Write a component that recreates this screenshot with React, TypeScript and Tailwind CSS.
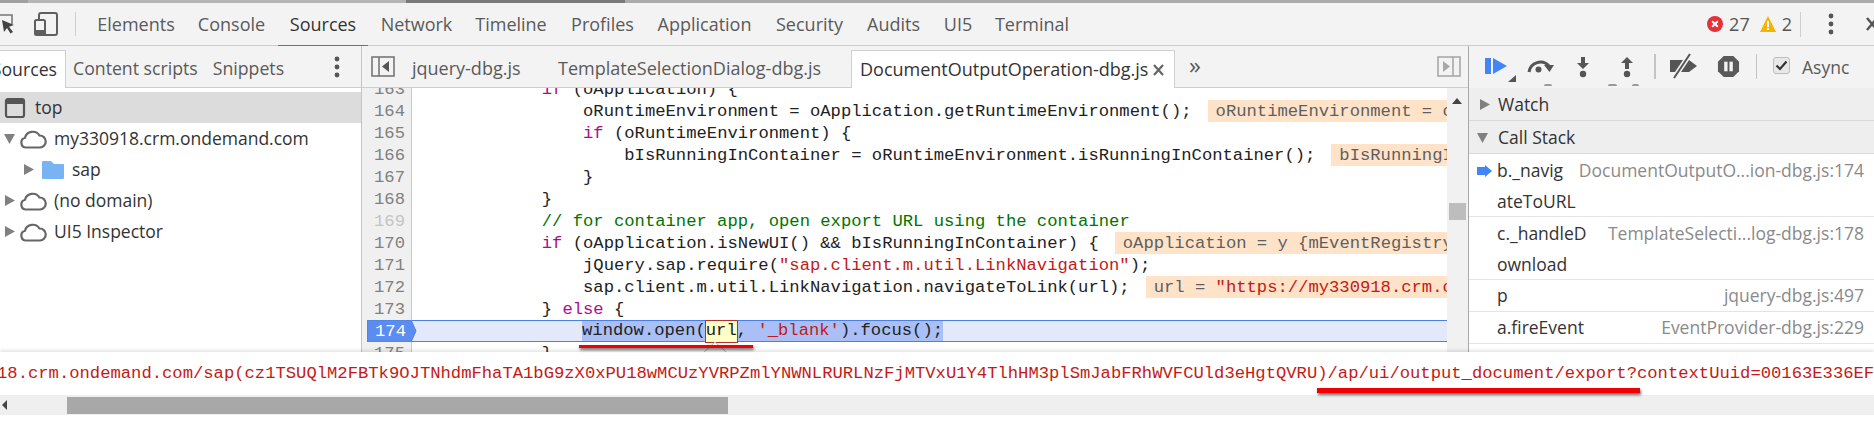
import React from "react";

const SANS = "font-['Open_Sans','Noto_Sans',sans-serif]";
const MONO = "font-['Liberation_Mono',monospace]";

const tabs: [string, string][] = [
  ["Elements", "w-[98px]"],
  ["Console", "w-[93px]"],
  ["Sources", "w-[90px]"],
  ["Network", "w-[97px]"],
  ["Timeline", "w-[92px]"],
  ["Profiles", "w-[91px]"],
  ["Application", "w-[113px]"],
  ["Security", "w-[97px]"],
  ["Audits", "w-[71px]"],
  ["UI5", "w-[58px]"],
  ["Terminal", "w-[90px]"],
];

function Cloud() {
  return (
    <svg width="28" height="22" viewBox="0 0 28 22" className="shrink-0 ml-[4px]">
      <path d="M7 19.500a5 5 0 0 1-1-9.800A8 8 0 0 1 20.500 7.500a6 6 0 0 1 .5 12z" fill="none" stroke="#666" strokeWidth="2.200" />
    </svg>
  );
}

function Tri({ open, className = "" }: { open?: boolean; className?: string }) {
  return (
    <svg width="11" height="11" viewBox="0 0 11 11" className={"shrink-0 " + className}>
      {open ? <path d="M0 1h11L5.500 11z" fill="#808080" /> : <path d="M1 0l10 5.500L1 11z" fill="#808080" />}
    </svg>
  );
}

function TreeRow({ children, active }: { children: React.ReactNode; active?: boolean }) {
  return <div className={"h-[31px] flex items-center text-[#333] " + (active ? "bg-[#dcdcdc]" : "")}>{children}</div>;
}

type Seg = { t: string; c?: string };
const K = "text-[#aa0d91]";
const S = "text-[#c41a16]";
const G = "text-[#007400]";

function Deco({ children }: { children: React.ReactNode }) {
  return <span className="bg-[#ffe3c9] text-[#5f5f5f] pl-[8px] ml-[16px] h-[22px] block flex-1 min-w-0 overflow-hidden">{children}</span>;
}

function Line({ n, segs, deco, dim }: { n: number; segs: Seg[]; deco?: React.ReactNode; dim?: boolean }) {
  return (
    <div className="h-[22px] flex items-center leading-[24px]">
      <div className={"w-[50px] shrink-0 h-full bg-[#f0f0f0] border-r border-[#c8c8c8] pr-[6px] text-right " + (dim ? "text-[#c4c4c4]" : "text-[#808080]")}>{n}</div>
      <div className="flex-1 min-w-0 flex pl-[6px] h-full whitespace-pre text-[#222] overflow-hidden">
        <span className="shrink-0">{segs.map((s, i) => <span key={i} className={s.c}>{s.t}</span>)}</span>
        {deco ? <Deco>{deco}</Deco> : null}
      </div>
    </div>
  );
}

export default function App() {
  return (
    <div className={"relative w-[1874px] h-[425px] overflow-hidden bg-white " + SANS}>
      {/* sliver of the page above */}
      <div className="h-[3px] bg-[#ababab] flex">
        <div className="w-[28px] bg-[#a0a0a0]" />
        <div className="w-[378px] bg-[#b5b5b5]" />
        <div className="w-[219px] bg-[#7a7a7a]" />
      </div>

      {/* main toolbar */}
      <div className="h-[43px] bg-[#f3f3f3] border-b border-[#cccccc] flex items-stretch text-[#5a5a5a] text-[18px]">
        <div className="w-[87px] shrink-0 relative flex items-center">
          <svg width="16" height="20" viewBox="0 0 16 20" className="shrink-0">
            <path d="M0 1h12v9" fill="none" stroke="#777" strokeWidth="1.600" />
            <path d="M2 6l12 5-5 1.800 4 5.200-2.500 1.500-3.500-5.500L4 18z" fill="#444" />
          </svg>
          <svg width="24" height="24" viewBox="0 0 24 24" className="shrink-0 ml-[18px]">
            <rect x="5" y="1" width="18" height="22" rx="2" fill="none" stroke="#5f5f5f" strokeWidth="2" />
            <rect x="1" y="8" width="10" height="15" rx="1.500" fill="#f3f3f3" stroke="#5f5f5f" strokeWidth="2" />
            <rect x="2" y="18" width="8" height="4" fill="#5f5f5f" />
          </svg>
          <div className="absolute left-[75px] top-[9px] bottom-[9px] w-px bg-[#cfcfcf]" />
        </div>
        {tabs.map(([t, w]) => (
          <div
            key={t}
            className={"flex items-center justify-center shrink-0 " + w + (t === "Sources" ? " text-[#333] border-b-2 border-[#3879d9] h-[44px]" : "")}
          >
            {t}
          </div>
        ))}
        <div className="flex-1" />
        <div className="flex items-center text-[18px] text-[#555]">
          <svg width="16" height="16" viewBox="0 0 16 16">
            <circle cx="8" cy="8" r="8" fill="#e5303a" />
            <path d="M5.200 5.200l5.600 5.600M10.800 5.200l-5.600 5.600" stroke="#fff" strokeWidth="2" />
          </svg>
          <span className="ml-[6px]">27</span>
          <svg width="16" height="16" viewBox="0 0 16 16" className="ml-[10px]">
            <path d="M8 0l8 16H0z" fill="#f4b400" />
            <path d="M7 5h2v6H7zM7 12h2v2H7z" fill="#fff" />
          </svg>
          <span className="ml-[6px]">2</span>
          <div className="w-px h-[25px] bg-[#cfcfcf] ml-[8px]" />
          <svg width="6" height="22" viewBox="0 0 6 22" className="ml-[27px]">
            <circle cx="3" cy="3" r="2.400" fill="#555" />
            <circle cx="3" cy="11" r="2.400" fill="#555" />
            <circle cx="3" cy="19" r="2.400" fill="#555" />
          </svg>
          <svg width="12" height="14" viewBox="0 0 12 14" className="ml-[32px] -mr-[4px]">
            <path d="M1 1l10 12M11 1L1 13" stroke="#555" strokeWidth="2.400" />
          </svg>
        </div>
      </div>

      {/* panels */}
      <div className="h-[306px] flex">
        {/* navigator */}
        <div className="w-[362px] shrink-0 border-r border-[#c4c4c4] bg-white text-[17.5px]">
          <div className="h-[42px] bg-[#f3f3f3] border-b border-[#cfcfcf] flex items-end text-[#5a5a5a] relative text-[17.7px]">
            <div className="w-[66px] h-[38px] bg-white border-r border-t border-[#d0d0d0] flex items-center justify-end pr-[8px] overflow-hidden text-[#333] -mb-px shrink-0">Sources</div>
            <div className="h-[38px] flex items-center ml-[7px]">Content scripts</div>
            <div className="h-[38px] flex items-center ml-[15px]">Snippets</div>
            <svg width="6" height="22" viewBox="0 0 6 22" className="absolute left-[334px] top-[10px]">
              <circle cx="3" cy="3" r="2.400" fill="#555" />
              <circle cx="3" cy="11" r="2.400" fill="#555" />
              <circle cx="3" cy="19" r="2.400" fill="#555" />
            </svg>
          </div>
          <div className="pt-[4px]">
            <TreeRow active>
              <svg width="22" height="22" viewBox="0 0 22 22" className="ml-[4px]">
                <rect x="2" y="2" width="18" height="18" rx="2" fill="none" stroke="#555" strokeWidth="2.200" />
                <rect x="2" y="2" width="18" height="5" fill="#555" />
              </svg>
              <span className="ml-[9px]">top</span>
            </TreeRow>
            <TreeRow>
              <Tri open className="ml-[4px]" />
              <Cloud />
              <span className="ml-[7px]">my330918.crm.ondemand.com</span>
            </TreeRow>
            <TreeRow>
              <Tri className="ml-[23px]" />
              <svg width="24" height="20" viewBox="0 0 24 20" className="ml-[7px]">
                <path d="M1 2a1 1 0 0 1 1-1h8l3 3h9a1 1 0 0 1 1 1v13a1 1 0 0 1-1 1H2a1 1 0 0 1-1-1z" fill="#78b3f4" />
              </svg>
              <span className="ml-[7px]">sap</span>
            </TreeRow>
            <TreeRow>
              <Tri className="ml-[4px]" />
              <Cloud />
              <span className="ml-[7px]">(no domain)</span>
            </TreeRow>
            <TreeRow>
              <Tri className="ml-[4px]" />
              <Cloud />
              <span className="ml-[7px]">UI5 Inspector</span>
            </TreeRow>
          </div>
        </div>

        {/* editor */}
        <div className="w-[1107px] shrink-0 flex flex-col border-r border-[#a8a8a8]">
          <div className="h-[42px] shrink-0 bg-[#f3f3f3] border-b border-[#cfcfcf] flex items-end text-[18px] text-[#5a5a5a] relative">
            <svg width="24" height="21" viewBox="0 0 24 21" className="absolute left-[9px] top-[10px]">
              <rect x="1" y="1" width="22" height="19" fill="none" stroke="#777" strokeWidth="1.600" />
              <path d="M8 1v19" stroke="#777" strokeWidth="1.600" />
              <path d="M18 5v11l-7-5.500z" fill="#555" />
            </svg>
            <div className="h-[38px] w-[146px] shrink-0 flex items-center ml-[50px]">jquery-dbg.js</div>
            <div className="h-[38px] w-[293px] shrink-0 flex items-center">TemplateSelectionDialog-dbg.js</div>
            <div className="h-[38px] w-[324px] shrink-0 bg-white border border-b-0 border-[#d0d0d0] flex items-center pl-[8px] text-[#333] -mb-px relative">
              DocumentOutputOperation-dbg.js
              <svg width="11" height="12" viewBox="0 0 11 12" className="absolute left-[301px] top-[13px]">
                <path d="M1 1l9 10M10 1L1 11" stroke="#666" strokeWidth="2.200" />
              </svg>
            </div>
            <div className="h-[38px] flex items-center ml-[14px] text-[24px] leading-none pb-[6px]">»</div>
            <svg width="24" height="21" viewBox="0 0 24 21" className="absolute left-[1075px] top-[10px]">
              <rect x="1" y="1" width="22" height="19" fill="none" stroke="#a8a8a8" strokeWidth="1.600" />
              <path d="M16 1v19" stroke="#a8a8a8" strokeWidth="1.600" />
              <path d="M6 5v11l7-5.500z" fill="#a8a8a8" />
            </svg>
          </div>
          <div className="flex-1 flex min-h-0">
            <div className={"flex-1 min-w-0 overflow-hidden text-[17.2px] relative " + MONO}>
              <div className="-mt-[10px]">
                <Line n={163} segs={[{ t: "            " }, { t: "if", c: K }, { t: " (oApplication) {" }]} />
                <Line n={164} segs={[{ t: "                oRuntimeEnvironment = oApplication.getRuntimeEnvironment();" }]} deco={<>oRuntimeEnvironment = oApplication</>} />
                <Line n={165} segs={[{ t: "                " }, { t: "if", c: K }, { t: " (oRuntimeEnvironment) {" }]} />
                <Line n={166} segs={[{ t: "                    bIsRunningInContainer = oRuntimeEnvironment.isRunningInContainer();" }]} deco={<>bIsRunningInContainer = true</>} />
                <Line n={167} segs={[{ t: "                }" }]} />
                <Line n={168} segs={[{ t: "            }" }]} />
                <Line n={169} dim segs={[{ t: "            " }, { t: "// for container app, open export URL using the container", c: G }]} />
                <Line n={170} segs={[{ t: "            " }, { t: "if", c: K }, { t: " (oApplication.isNewUI() && bIsRunningInContainer) {" }]} deco={<>oApplication = y {"{"}mEventRegistry: Object</>} />
                <Line n={171} segs={[{ t: "                jQuery.sap.require(" }, { t: '"sap.client.m.util.LinkNavigation"', c: S }, { t: ");" }]} />
                <Line n={172} segs={[{ t: "                sap.client.m.util.LinkNavigation.navigateToLink(url);" }]} deco={<>url = <span className={S}>"https://my330918.crm.ondemand.com</span></>} />
                <Line n={173} segs={[{ t: "            } " }, { t: "else", c: K }, { t: " {" }]} />
                <div className="h-[22px] flex items-stretch leading-[24px]">
                  <div className="w-[50px] shrink-0 bg-[#f0f0f0] border-r border-[#c8c8c8]" />
                  <div className="flex-1 bg-[#e3e9fb] border-y border-[#4a7fe8] whitespace-pre pl-[170px] text-[#222] flex items-center">
                    <span className="bg-[#a9bff5] h-full flex items-center">
                      window.open(<span className="bg-[#ffffc6] h-[23px] border border-[#b5302a] -mx-px flex items-center">url</span>, <span className={S}>'_blank'</span>).focus();
                    </span>
                  </div>
                </div>
                <Line n={175} segs={[{ t: "            }" }]} />
              </div>
              {/* breakpoint marker */}
              <svg width="50" height="22" viewBox="0 0 50 22" className="absolute left-[5px] top-[232px]">
                <path d="M0 0h44l5 11-5 11H0z" fill="#5b8cf0" stroke="#4a7fe8" />
              </svg>
              <span className="absolute left-[13px] top-[232px] h-[22px] leading-[24px] text-white">174</span>
            </div>
            {/* vertical scrollbar */}
            <div className="w-[21px] shrink-0 bg-[#f1f1f1] relative">
              <svg width="10" height="6" viewBox="0 0 10 6" className="absolute left-[5px] top-[10px]">
                <path d="M5 0l5 6H0z" fill="#444" />
              </svg>
              <div className="absolute left-[2px] top-[115px] w-[17px] h-[17px] bg-[#bdbdbd]" />
            </div>
          </div>
        </div>

        {/* debugger sidebar */}
        <div className="flex-1 min-w-0 bg-white text-[17.5px] text-[#333]">
          <div className="h-[42px] bg-[#f3f3f3] flex items-center relative text-[#5a5a5a]">
            <svg width="22" height="16" viewBox="0 0 22 16" className="absolute left-[16px] top-[12px]">
              <rect x="0" y="0" width="6" height="16" fill="#4285f4" />
              <path d="M8 0l14 8-14 8z" fill="#4285f4" />
            </svg>
            <svg width="8" height="7" viewBox="0 0 8 7" className="absolute left-[39px] top-[29px]"><path d="M8 0v7H0z" fill="#555" /></svg>
            <svg width="28" height="16" viewBox="0 0 28 16" className="absolute left-[58px] top-[12px]">
              <path d="M2 14A11.500 11.500 0 0 1 22 8" fill="none" stroke="#555" strokeWidth="3" />
              <path d="M17 7h10l-4.500 7z" fill="#555" />
              <circle cx="11.500" cy="11.500" r="3" fill="#555" />
            </svg>
            <svg width="14" height="22" viewBox="0 0 14 22" className="absolute left-[107px] top-[10px]">
              <path d="M5 1h4v6h4l-6 6-6-6h4z" fill="#555" />
              <circle cx="7" cy="18" r="3.200" fill="#555" />
            </svg>
            <svg width="14" height="22" viewBox="0 0 14 22" className="absolute left-[151px] top-[10px]">
              <path d="M7 1l6 6H9v6H5V7H1z" fill="#555" />
              <circle cx="7" cy="18" r="3.200" fill="#555" />
            </svg>
            <div className="absolute left-[185px] top-[8px] w-[2px] h-[25px] bg-[#c4c4c4]" />
            <svg width="28" height="26" viewBox="0 0 28 26" className="absolute left-[201px] top-[7px]">
              <path d="M0 7h19l8 6-8 6H0z" fill="#555" />
              <path d="M4 25L20 1" stroke="#f3f3f3" strokeWidth="5" />
              <path d="M4 25L20 1" stroke="#555" strokeWidth="2" />
            </svg>
            <svg width="23" height="23" viewBox="0 0 24 24" className="absolute left-[248px] top-[9px]">
              <path d="M7 1h10l6 6v10l-6 6H7l-6-6V7z" fill="#5a5a5a" />
              <rect x="7.500" y="7" width="3.500" height="10" fill="#f3f3f3" />
              <rect x="13" y="7" width="3.500" height="10" fill="#f3f3f3" />
            </svg>
            <div className="absolute left-[287px] top-[8px] w-px h-[25px] bg-[#c4c4c4]" />
            <div className="absolute left-[304px] top-[11px] w-[17px] h-[17px] rounded-[3px] bg-[#e8e8e8] border border-[#bdbdbd] flex items-center justify-center">
              <svg width="13" height="11" viewBox="0 0 13 11"><path d="M1.500 5.500l3.500 3.500L11.500 1.500" fill="none" stroke="#333" strokeWidth="2.200" /></svg>
            </div>
            <span className="absolute left-[333px] top-[8px]">Async</span>
            <div className="absolute left-[75px] top-[38px] w-[8px] h-[2px] rounded-t-full bg-[#999]" />
            <div className="absolute left-[139px] top-[38px] w-[9px] h-[2px] rounded-t-full bg-[#999]" />
            <div className="absolute left-[163px] top-[38px] w-[7px] h-[2px] rounded-t-full bg-[#999]" />
          </div>
          <div className="h-[33px] bg-[#eeeeee] border-b border-[#d8d8d8] flex items-center">
            <Tri className="ml-[10px]" />
            <span className="ml-[8px]">Watch</span>
          </div>
          <div className="h-[33px] bg-[#eeeeee] border-b border-[#d8d8d8] flex items-center">
            <Tri open className="ml-[8px]" />
            <span className="ml-[10px]">Call Stack</span>
          </div>
          <div className="relative pl-[28px] pr-[10px] pt-[1px] h-[63px] border-b border-[#e4e4e4] leading-[31px]">
            <svg width="15" height="12" viewBox="0 0 15 12" className="absolute left-[8px] top-[11px]"><path d="M0 2h8V0l7 6-7 6v-2H0z" fill="#4285f4" /></svg>
            <div className="flex justify-between"><span>b._navig</span><span className="text-[#8a8a8a]">DocumentOutputO...ion-dbg.js:174</span></div>
            <div>ateToURL</div>
          </div>
          <div className="pl-[28px] pr-[10px] pt-[1px] h-[63px] border-b border-[#e4e4e4] leading-[31px]">
            <div className="flex justify-between"><span>c._handleD</span><span className="text-[#8a8a8a]">TemplateSelecti...log-dbg.js:178</span></div>
            <div>ownload</div>
          </div>
          <div className="pl-[28px] pr-[10px] h-[32px] border-b border-[#e4e4e4] leading-[31px] flex justify-between">
            <span>p</span><span className="text-[#8a8a8a]">jquery-dbg.js:497</span>
          </div>
          <div className="pl-[28px] pr-[10px] h-[32px] border-b border-[#e4e4e4] leading-[31px] flex justify-between">
            <span>a.fireEvent</span><span className="text-[#8a8a8a]">EventProvider-dbg.js:229</span>
          </div>
        </div>
      </div>

      {/* tooltip pointer */}
      <svg width="24" height="11" viewBox="0 0 24 11" className="absolute left-[703px] top-[341px]">
        <path d="M1 11L12 1l11 10" fill="#fff" stroke="#bbb" />
      </svg>

      {/* URL tooltip */}
      <div className={"h-[43px] bg-white shadow-[0_-2px_3px_rgba(0,0,0,0.1)] relative flex items-center whitespace-pre overflow-hidden text-[#c41a16] text-[17.2px] " + MONO}>
        <span className="-ml-[3px]">18.crm.ondemand.com/sap(cz1TSUQlM2FBTk9OJTNhdmFhaTA1bG9zX0xPU18wMCUzYVRPZmlYNWNLRURLNzFjMTVxU1Y4TlhHM3plSmJabFRhWVFCUld3eHgtQVRU)/ap/ui/output_document/export?contextUuid=00163E336EF7</span>
      </div>

      {/* horizontal scrollbar */}
      <div className="h-[20px] bg-[#efefef] flex items-center">
        <svg width="5" height="10" viewBox="0 0 5 10" className="ml-[2px]"><path d="M5 0v10L0 5z" fill="#444" /></svg>
        <div className="ml-[60px] w-[661px] h-[17px] bg-[#a8a8a8]" />
      </div>

      {/* hand-drawn red annotations */}
      <div className="absolute left-[579px] top-[345px] w-[174px] h-[3px] bg-[#f00000] shadow-[1px_2px_3px_rgba(0,0,0,0.6)]" />
      <div className="absolute left-[1317px] top-[388px] w-[323px] h-[5px] bg-[#f00000] shadow-[1px_2px_3px_rgba(0,0,0,0.6)]" />
    </div>
  );
}
